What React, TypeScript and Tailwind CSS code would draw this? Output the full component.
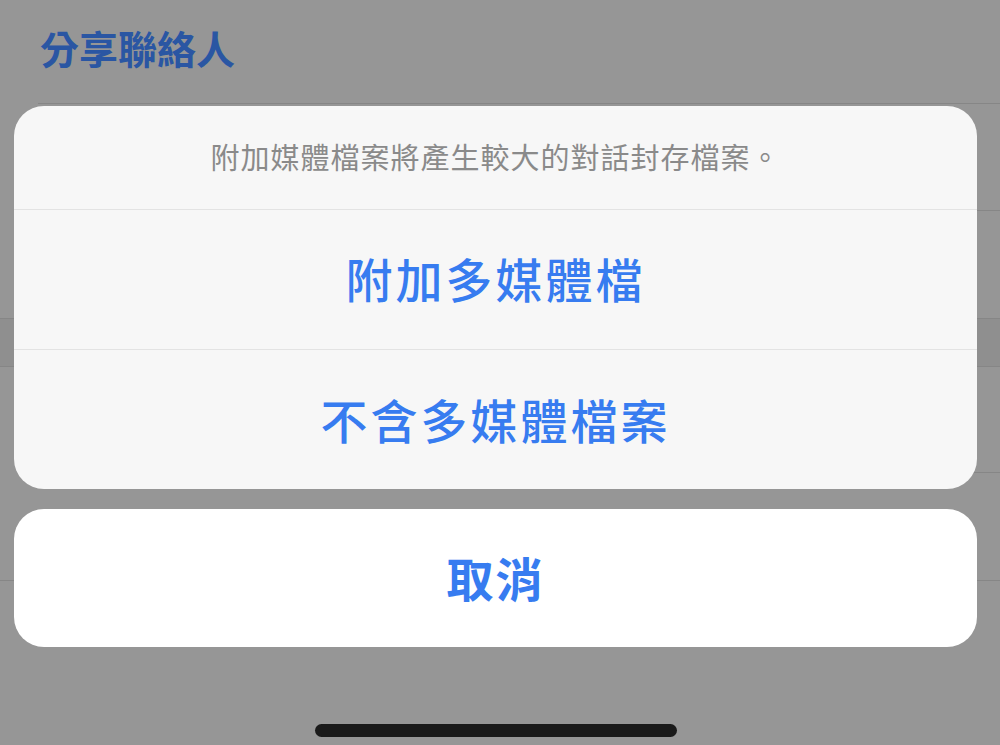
const cjk = { fontFamily: '"Noto Sans CJK TC", "Noto Sans", sans-serif' };

const Row = ({ inset, h }: { inset?: boolean; h: string }) => (
  <div className={`${h} flex items-end ${inset ? "pl-[38px]" : ""}`}>
    <div className="w-full h-px bg-[#868686]" />
  </div>
);

const App = () => {
  return (
    <div className="relative w-[1000px] h-[745px] overflow-hidden bg-[#969696]" style={cjk}>
      {/* background list */}
      <div className="flex flex-col">
        <div className="h-[103px] flex items-center pl-[40px] pb-[8px]">
          <span className="text-[39px] font-semibold text-[#2a56a3] leading-none">分享聯絡人</span>
        </div>
        <div className="pl-[38px]">
          <div className="h-px bg-[#868686]" />
        </div>
        <Row inset h="h-[107px]" />
        <Row h="h-[108px]" />
        <div className="h-[48px] bg-[#8f8f8f] flex items-end">
          <div className="w-full h-px bg-[#868686]" />
        </div>
        <Row inset h="h-[106px]" />
        <Row h="h-[108px]" />
        <div className="flex-1 bg-[#929292]" />
      </div>

      {/* action sheet */}
      <div className="absolute left-[14px] top-[106px] w-[963px] flex flex-col gap-[20px]">
        <div className="bg-[#f7f7f7] rounded-[30px] flex flex-col overflow-hidden">
          <div className="h-[104px] flex items-center justify-center pb-[3px] border-b border-[#e3e3e3]">
            <span className="text-[29px] tracking-[1px] text-[#8a8a8a] leading-none">附加媒體檔案將產生較大的對話封存檔案。</span>
          </div>
          <div className="h-[140px] flex items-center justify-center pb-[4px] border-b border-[#e3e3e3]">
            <span className="text-[47px] font-medium tracking-[3px] text-[#377cf0] leading-none">附加多媒體檔</span>
          </div>
          <div className="h-[139px] flex items-center justify-center pb-[2px]">
            <span className="text-[47px] font-medium tracking-[3px] text-[#377cf0] leading-none">不含多媒體檔案</span>
          </div>
        </div>
        <div className="h-[138px] bg-white rounded-[30px] flex items-center justify-center pb-[4px]">
          <span className="text-[47px] font-semibold tracking-[2px] text-[#377cf0] leading-none">取消</span>
        </div>
      </div>

      {/* home indicator */}
      <div className="absolute left-[315px] top-[724px] w-[362px] h-[13px] rounded-full bg-[#1a1a1a]" />
    </div>
  );
};

export default App;
